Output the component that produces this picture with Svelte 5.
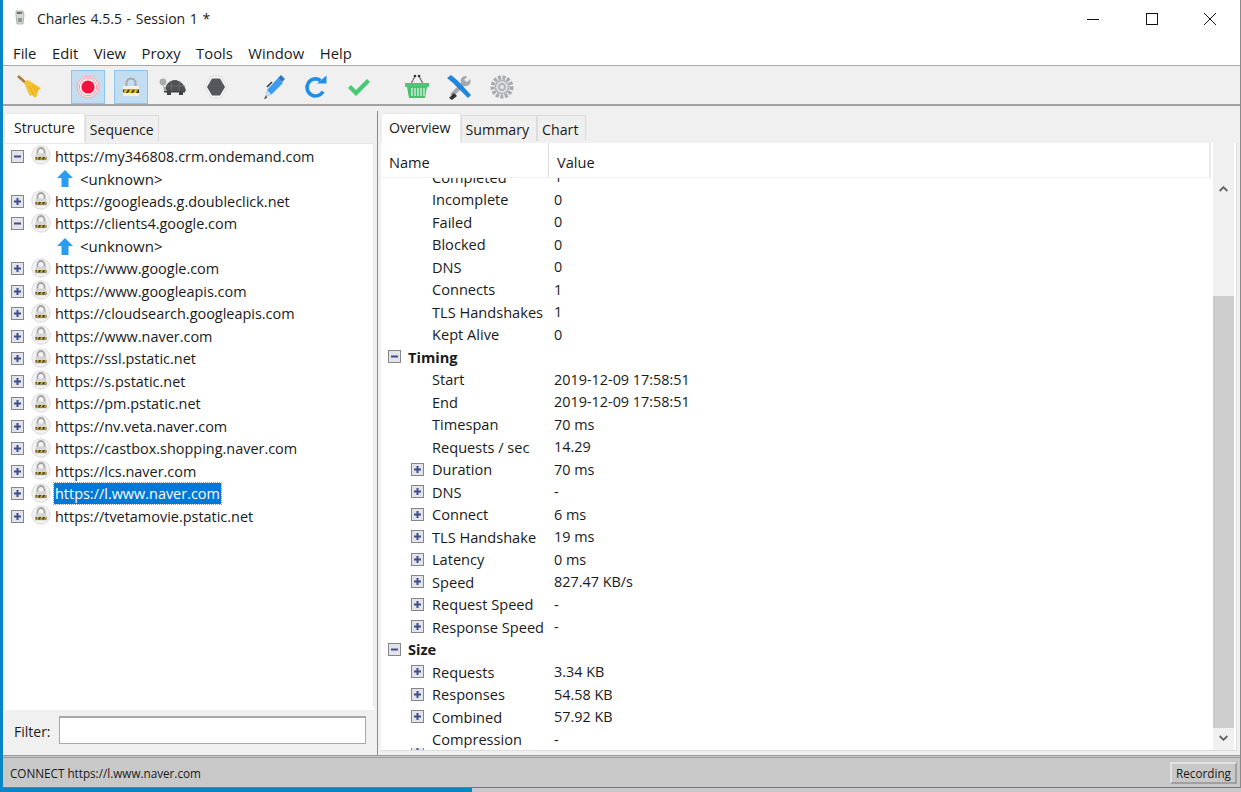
<script>
  const menus = ['File', 'Edit', 'View', 'Proxy', 'Tools', 'Window', 'Help'];

  const hosts = [
    ['https://my346808.crm.ondemand.com', true],
    ['https://googleads.g.doubleclick.net', false],
    ['https://clients4.google.com', true],
    ['https://www.google.com', false],
    ['https://www.googleapis.com', false],
    ['https://cloudsearch.googleapis.com', false],
    ['https://www.naver.com', false],
    ['https://ssl.pstatic.net', false],
    ['https://s.pstatic.net', false],
    ['https://pm.pstatic.net', false],
    ['https://nv.veta.naver.com', false],
    ['https://castbox.shopping.naver.com', false],
    ['https://lcs.naver.com', false],
    ['https://l.www.naver.com', false],
    ['https://tvetamovie.pstatic.net', false]
  ];

  // kind: s = section, p = expandable child, c = plain child
  const rows = [
    ['c', 'Completed', '1'],
    ['c', 'Incomplete', '0'],
    ['c', 'Failed', '0'],
    ['c', 'Blocked', '0'],
    ['c', 'DNS', '0'],
    ['c', 'Connects', '1'],
    ['c', 'TLS Handshakes', '1'],
    ['c', 'Kept Alive', '0'],
    ['s', 'Timing', ''],
    ['c', 'Start', '2019-12-09 17:58:51'],
    ['c', 'End', '2019-12-09 17:58:51'],
    ['c', 'Timespan', '70 ms'],
    ['c', 'Requests / sec', '14.29'],
    ['p', 'Duration', '70 ms'],
    ['p', 'DNS', '-'],
    ['p', 'Connect', '6 ms'],
    ['p', 'TLS Handshake', '19 ms'],
    ['p', 'Latency', '0 ms'],
    ['p', 'Speed', '827.47 KB/s'],
    ['p', 'Request Speed', '-'],
    ['p', 'Response Speed', '-'],
    ['s', 'Size', ''],
    ['p', 'Requests', '3.34 KB'],
    ['p', 'Responses', '54.58 KB'],
    ['p', 'Combined', '57.92 KB'],
    ['c', 'Compression', '-']
  ];
</script>

{#snippet expander(open)}
  <svg class="exp" width="13" height="13" viewBox="0 0 13 13">
    <rect x="0.5" y="0.5" width="12" height="12" fill="#e4e4e8" stroke="#85858d" />
    <rect x="3" y="5.500" width="7" height="2" fill="#3c4f8c" />
    {#if !open}<rect x="5.500" y="3" width="2" height="7" fill="#3c4f8c" />{/if}
  </svg>
{/snippet}

{#snippet lockBadge()}
  <svg class="badge" width="20" height="20" viewBox="0 0 20 20">
    <circle cx="10" cy="10" r="9.2" fill="#f2f2f2" stroke="#dadada" />
    <path d="M6.500 9V6.500a3.500 3.500 0 0 1 7 0V9" fill="none" stroke="#a4a4a4" stroke-width="1.800" />
    <rect x="4.500" y="8.500" width="11" height="7" fill="#d4d4d4" />
    <rect x="4.500" y="12" width="11" height="2.600" fill="#3a3a30" />
    <path d="M6 12h2l-1 2.600H5zM10 12h2l-1 2.600H9zM14 12h1.500v1l-1 1.600H13z" fill="#d8b020" />
  </svg>
{/snippet}

<div class="desktop">
  <div class="window">
    <header class="titlebar">
      <svg class="appicon" width="16" height="18" viewBox="0 0 16 18">
        <path d="M4 2h7l1 4-1 9H5L4 6z" fill="#d4d8d3" stroke="#9a9e99" stroke-width="0.700" />
        <path d="M6 9h4v4H6z" fill="#8b9a90" />
        <path d="M5 3h5v2H5z" fill="#6d7270" />
      </svg>
      <span class="title">Charles 4.5.5 - Session 1 *</span>
      <div class="winbtns">
        <svg width="14" height="14" viewBox="0 0 14 14"><path d="M1 7.500h12" stroke="#111" fill="none" /></svg>
        <svg width="14" height="14" viewBox="0 0 14 14"><rect x="1.500" y="1.500" width="11" height="11" stroke="#111" fill="none" /></svg>
        <svg width="14" height="14" viewBox="0 0 14 14"><path d="M1 1l12 12M13 1L1 13" stroke="#111" fill="none" /></svg>
      </div>
    </header>

    <nav class="menubar">
      {#each menus as m}<span>{m}</span>{/each}
    </nav>

    <div class="toolbar">
      <div class="group">
        <button aria-label="Clear">
          <svg width="28" height="28" viewBox="0 0 28 28">
            <path d="M2 3l9 8" stroke="#a8783a" stroke-width="2.400" />
            <path d="M8 9l4-2 13 8-3 3-1 5-2 2-3-3-2 1-3-6z" fill="#f4c430" />
            <path d="M13 13l5 9M16 12l5 8M19 13l3 4" stroke="#d99e18" stroke-width="0.800" />
          </svg>
        </button>
      </div>
      <div class="group">
        <button class="on" aria-label="Record">
          <svg width="24" height="24" viewBox="0 0 24 24">
            <circle cx="12" cy="12" r="11" fill="#f4dfe4" stroke="#f0a9b6" />
            <circle cx="12" cy="12" r="8.600" fill="#fff" stroke="#f19aab" />
            <circle cx="12" cy="12" r="6.600" fill="#f3123e" />
          </svg>
        </button>
        <button class="on" aria-label="Throttle SSL">
          <svg width="24" height="26" viewBox="0 0 24 26">
            <path d="M7.500 13V9a4.500 4.500 0 0 1 9 0v4" fill="none" stroke="#a8a8a8" stroke-width="2" />
            <rect x="4" y="12" width="16" height="10" rx="1" fill="#f6f1dc" />
            <rect x="4" y="15.500" width="16" height="3.500" fill="#33332b" />
            <path d="M6 15.500h3l-2 3.500H4zM11 15.500h3l-2 3.500H9zM16 15.500h3l-2 3.500h-3z" fill="#e8bc1c" />
          </svg>
        </button>
        <button aria-label="Throttle">
          <svg width="28" height="24" viewBox="0 0 28 24">
            <path d="M6 16c0-7 5-11 10-11s10 5 11 11z" fill="#4e5054" />
            <path d="M12 6l1 10M20 6l0 10M7 11h19" stroke="#737578" stroke-width="0.800" />
            <circle cx="4" cy="7" r="3.400" fill="#a9aca8" />
            <path d="M4 9l4 7-3 0z" fill="#a9aca8" />
            <path d="M5 16h21v1.500H5zM8 17h4v3H8zM20 17h4v3h-4z" fill="#3e4044" />
          </svg>
        </button>
        <button aria-label="Breakpoints">
          <svg width="26" height="26" viewBox="0 0 26 26">
            <path d="M8 2h10l6 11-6 11H8L2 13z" fill="#f6f6f6" stroke="#dfdfdf" />
            <path d="M9 4.500h8l5 8.500-5 8.500H9L4 13z" fill="#55575b" />
          </svg>
        </button>
      </div>
      <div class="group">
        <button aria-label="Compose">
          <svg width="28" height="28" viewBox="0 0 28 28">
            <path d="M18 5l5 5-11 11-6 3 1-7z" fill="#3c9cf2" />
            <path d="M18 5l3-3 4 4-3 3z" fill="#2b77c9" />
            <path d="M7 17l4 4-5 3z" fill="#d8dce2" />
            <path d="M12 9l-5 5" stroke="#33363a" stroke-width="1.600" />
            <path d="M6 22l-2 4 3-1z" fill="#44474c" />
          </svg>
        </button>
        <button aria-label="Repeat">
          <svg width="26" height="26" viewBox="0 0 26 26">
            <path d="M20 17.500A8.500 8.500 0 1 1 17.500 6.500" fill="none" stroke="#1e8fe8" stroke-width="3.600" />
            <path d="M14 9.500h9.500V1.500z" fill="#1e8fe8" />
          </svg>
        </button>
        <button aria-label="Validate">
          <svg width="26" height="26" viewBox="0 0 26 26">
            <path d="M2 14l3-3 5 5L21 5l3 3-14 14z" fill="#47c872" />
          </svg>
        </button>
      </div>
      <div class="group">
        <button aria-label="Shopping">
          <svg width="28" height="28" viewBox="0 0 28 28">
            <path d="M8 11l4-8M20 11l-4-8" stroke="#70767a" stroke-width="1.300" fill="none" />
            <circle cx="12" cy="3" r="1.300" fill="#333" />
            <circle cx="16" cy="3" r="1.300" fill="#333" />
            <rect x="2" y="10" width="24" height="4" fill="#4dc775" />
            <path d="M4 14h20l-2 11H6z" fill="#49c070" />
            <path d="M9 15v8M12 15v8M15 15v8M18 15v8M21 15v8" stroke="#e8f8ec" stroke-width="1.200" />
          </svg>
        </button>
        <button aria-label="Tools">
          <svg width="28" height="28" viewBox="0 0 28 28">
            <path d="M21 3a5 5 0 0 0-5 7L5 21l3 3L19 13a5 5 0 0 0 6-7l-3 3-3-2 3-3z" fill="#a5a9ad" />
            <path d="M2 5l4-3 6 5 3 3 11 12-3 3-12-12-3-3z" fill="#1f86e0" />
            <path d="M4 25l5-5 3 3-5 4z" fill="#2f3236" />
          </svg>
        </button>
        <button aria-label="Settings">
          <svg width="26" height="26" viewBox="0 0 26 26">
            <circle cx="13" cy="13" r="9.500" fill="none" stroke="#a7a9ae" stroke-width="4" stroke-dasharray="3 1.500" />
            <circle cx="13" cy="13" r="7.500" fill="#b3b5b9" />
            <circle cx="13" cy="13" r="5" fill="none" stroke="#e6e6e6" stroke-width="1.600" />
            <circle cx="13" cy="13" r="2" fill="#e6e6e6" />
          </svg>
        </button>
      </div>
    </div>

    <main class="panes">
      <section class="left">
        <div class="tabs">
          <span class="tab active">Structure</span>
          <span class="tab">Sequence</span>
        </div>
        <div class="tree">
          {#each hosts as [host, open]}
            <div class="host">
              {@render expander(open)}
              {@render lockBadge()}
              <span class="url" class:selected={host === 'https://l.www.naver.com'}>{host}</span>
            </div>
            {#if open}
              <div class="host sub">
                <svg width="16" height="17" viewBox="0 0 16 17"><path d="M8 0l8 8h-4.500v9h-7V8H0z" fill="#2c9cf0" /></svg>
                <span>&lt;unknown&gt;</span>
              </div>
            {/if}
          {/each}
        </div>
        <div class="filter">
          <label for="flt">Filter:</label>
          <input id="flt" type="text" />
        </div>
      </section>

      <section class="right">
        <div class="tabs">
          <span class="tab active">Overview</span>
          <span class="tab">Summary</span>
          <span class="tab">Chart</span>
        </div>
        <div class="overview">
          <div class="tablewrap">
            <div class="thead">
              <span class="namecol">Name</span>
              <span class="valcol">Value</span>
            </div>
            <div class="tbody">
              <div class="rowsinner">
                {#each rows as [kind, name, value]}
                  <div class="row {kind}">
                    {#if kind === 's'}
                      {@render expander(true)}
                    {:else if kind === 'p'}
                      {@render expander(false)}
                    {/if}
                    <span class="rname">{name}</span>
                    <span class="rval">{value}</span>
                  </div>
                {/each}
              </div>
              <div class="cliprow">
                {@render expander(false)}
                <span class="rname">Request Compression</span>
              </div>
            </div>
          </div>
          <div class="scrollbar">
            <div class="headgap"></div>
            <svg class="arrow" width="9" height="6" viewBox="0 0 9 6"><path d="M0.700 5L4.500 1.200 8.300 5" fill="none" stroke="#606060" stroke-width="1.800" /></svg>
            <div class="track"><div class="thumb"></div></div>
            <svg class="arrow" width="9" height="6" viewBox="0 0 9 6"><path d="M0.700 1L4.500 4.800 8.300 1" fill="none" stroke="#606060" stroke-width="1.800" /></svg>
          </div>
        </div>
      </section>
    </main>

    <footer class="status">
      <span>CONNECT https://l.www.naver.com</span>
      <span class="recording">Recording</span>
    </footer>
  </div>
  <div class="taskbar"><div class="fill"></div></div>
</div>

<style>
  :global(body) {
    margin: 0;
    background: #0b84c6;
  }
  .desktop {
    width: 1241px;
    height: 792px;
    display: flex;
    flex-direction: column;
    background: #0b84c6;
    font-family: 'Open Sans', 'Noto Sans', sans-serif;
    font-size: 14px;
    color: #1a1a1a;
    overflow: hidden;
  }
  .window {
    height: 788px;
    margin-left: 3px;
    box-sizing: border-box;
    border-right: 1px solid #8a8a8a;
    border-bottom: 1px solid #777;
    background: #f0f0f0;
    display: flex;
    flex-direction: column;
  }
  .taskbar {
    height: 4px;
    background: #0b84c6;
    display: flex;
    justify-content: flex-end;
  }
  .fill {
    width: 769px;
    background: #c6c8ca;
  }
  .titlebar {
    height: 38px;
    flex: none;
    background: #fff;
    display: flex;
    align-items: center;
    padding-left: 9px;
    padding-bottom: 2px;
    box-sizing: border-box;
  }
  .appicon {
    margin-right: 9px;
  }
  .title {
    font-size: 14px;
    word-spacing: 1px;
  }
  .winbtns {
    margin-left: auto;
    display: flex;
    gap: 44.500px;
    margin-right: 23px;
    margin-top: 2px;
  }
  .winbtns svg {
    display: block;
  }
  .menubar {
    height: 28px;
    flex: none;
    background: #fff;
    border-bottom: 1px solid #a8a8a8;
    box-sizing: border-box;
    display: flex;
    gap: 15.500px;
    padding-left: 10px;
    line-height: 31px;
    font-size: 14.800px;
  }
  .toolbar {
    height: 40px;
    flex: none;
    box-sizing: border-box;
    border-bottom: 2px solid #a2a2a2;
    background: #f0f0f0;
    display: flex;
    gap: 24px;
    padding: 1px 0 0 10px;
  }
  .group {
    display: flex;
    gap: 8.500px;
  }
  .toolbar button {
    width: 34px;
    height: 34px;
    padding: 0;
    border: 1px solid transparent;
    background: transparent;
    display: flex;
    align-items: center;
    justify-content: center;
    margin-top: 3px;
  }
  .toolbar button.on {
    background: #c2dcf0;
    border-color: #8cc4f0;
  }
  .panes {
    flex: 1;
    min-height: 0;
    display: flex;
    padding-top: 5px;
  }
  .left {
    width: 375px;
    flex: none;
    box-sizing: border-box;
    padding: 0 0 0 1px;
    border-right: 1px solid #8a8a8a;
    display: flex;
    flex-direction: column;
  }
  .tabs {
    display: flex;
    height: 32px;
    flex: none;
    align-items: flex-end;
    padding-top: 2px;
    box-sizing: border-box;
  }
  .tab {
    box-sizing: border-box;
    height: 26px;
    line-height: 27px;
    padding: 0 4px;
    background: #efefef;
    border: 1px solid #dcdcdc;
    border-bottom: 0;
    margin-bottom: 2px;
  }
  .tab.active {
    height: 30px;
    line-height: 27px;
    background: #fff;
    border-color: #e8e8e8;
    padding: 0 9px;
    margin-bottom: 0;
    position: relative;
  }
  .right .tab {
    font-size: 14.200px;
    padding: 0 7px 0 4px;
  }
  .right .tab.active {
    padding: 0 9px 0 7px;
  }
  .tree {
    flex: 1;
    min-height: 0;
    background: #fff;
    margin: 0 3px 0 1px;
    padding-top: 1px;
    border: 1px solid #e8e8e8;
    border-bottom: 0;
    border-left: 0;
    font-size: 14.450px;
  }
  .host {
    height: 22.500px;
    display: flex;
    align-items: center;
    padding-left: 6px;
    white-space: nowrap;
  }
  .host .exp {
    margin-right: 7px;
  }
  .host .badge {
    margin-right: 3px;
    margin-top: -2px;
  }
  .url {
    padding: 0 1px;
    height: 21px;
    line-height: 21px;
    box-sizing: border-box;
  }
  .selected {
    background: #0078d7;
    color: #fff;
    outline: 1px dotted #f08a1c;
  }
  .sub {
    padding-left: 52px;
    gap: 7px;
    font-size: 15px;
  }
  .filter {
    height: 43px;
    flex: none;
    box-sizing: border-box;
    margin: 0 3px 6px 1px;
    background: #f0f0f0;
    border-top: 4px solid #fff;
    display: flex;
    align-items: center;
    padding: 0 8px 0 9px;
    gap: 8px;
  }
  .filter label {
    font-size: 14px;
    padding-top: 4px;
  }
  .filter input {
    flex: 1;
    min-width: 0;
    height: 28px;
    box-sizing: border-box;
    border: 1px solid #a8a8a8;
    border-top-width: 2px;
    background: #fff;
    padding: 0;
  }
  .right {
    flex: 1;
    min-width: 0;
    box-sizing: border-box;
    margin-left: 3px;
    display: flex;
    flex-direction: column;
    padding-right: 3px;
    font-size: 14.600px;
  }
  .overview {
    flex: 1;
    min-height: 0;
    display: flex;
    background: #fff;
    border: 1px solid #dcdcdc;
    border-top: 0;
    border-left: 0;
    margin-bottom: 4px;
  }
  .tablewrap {
    flex: 1;
    min-width: 0;
    display: flex;
    flex-direction: column;
  }
  .thead {
    height: 35px;
    flex: none;
    box-sizing: border-box;
    border-bottom: 1px solid #f0f0f0;
    border-right: 2px solid #eaeaea;
    display: flex;
    align-items: stretch;
    margin-right: 2px;
    line-height: 38px;
  }
  .namecol {
    width: 168px;
    padding-left: 8px;
    box-sizing: border-box;
    border-right: 1px solid #dedede;
  }
  .valcol {
    padding-left: 8px;
  }
  .tbody {
    flex: 1;
    min-height: 0;
    overflow: hidden;
    position: relative;
  }
  .rowsinner {
    margin-top: -12.500px;
    height: 582px;
    overflow: hidden;
  }
  .row {
    height: 22.500px;
    display: flex;
    align-items: center;
    white-space: nowrap;
    position: relative;
  }
  .rname {
    white-space: nowrap;
  }
  .row.c {
    padding-left: 51px;
  }
  .row.p {
    padding-left: 30px;
  }
  .row.s {
    padding-left: 7px;
  }
  .row.s .rname {
    font-weight: 700;
    margin-left: 7px;
  }
  .row.p .rname {
    margin-left: 8px;
  }
  .rval {
    position: absolute;
    left: 173px;
    font-size: 14.400px;
  }
  .cliprow {
    height: 3px;
    overflow: hidden;
    display: flex;
    padding-left: 30px;
    gap: 8px;
    line-height: 12px;
    align-items: flex-start;
  }
  .cliprow .exp {
    margin-top: -3px;
  }
  .scrollbar {
    width: 21px;
    flex: none;
    margin: 0 2px 0 0;
    background: #f0f0f0;
    display: flex;
    flex-direction: column;
    align-items: center;
  }
  .headgap {
    height: 43px;
    flex: none;
  }
  .track {
    flex: 1;
    min-height: 0;
    width: 100%;
  }
  .thumb {
    margin-top: 95px;
    height: 432px;
    background: #cdcdcd;
  }
  .arrow {
    flex: none;
    margin: 0 0 9px;
  }
  .status {
    height: 32px;
    flex: none;
    box-sizing: border-box;
    background: #c8c8c8;
    border-top: 3px double #9a9a9a;
    display: flex;
    align-items: center;
    justify-content: space-between;
    padding: 1px 3px 0 7px;
    font-size: 11.700px;
  }
  .recording {
    width: 67px;
    height: 22px;
    box-sizing: border-box;
    border: 2px solid #e2e2e2;
    border-right-color: #a0a0a0;
    border-bottom-color: #a0a0a0;
    line-height: 19px;
    text-align: center;
  }
</style>
